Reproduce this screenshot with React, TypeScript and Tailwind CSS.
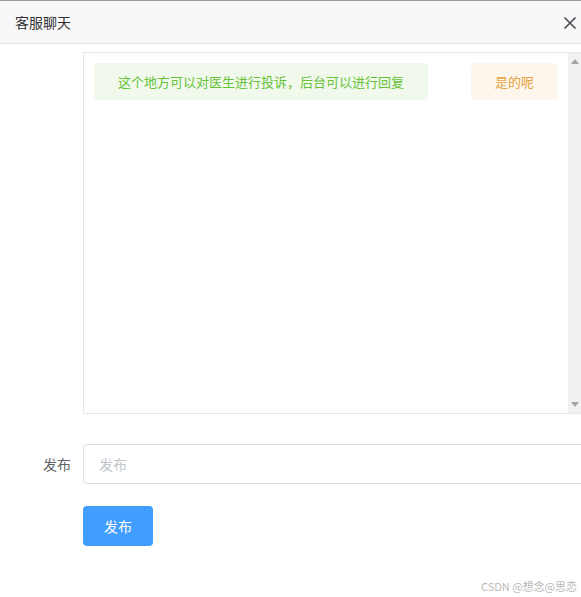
import React from "react";

const font = { fontFamily: '"Noto Sans CJK SC", "Noto Sans", sans-serif' };

export default function App() {
  return (
    <div className="w-[581px] h-[597px] bg-white overflow-hidden relative" style={font}>
      <div className="h-px bg-[#9a9a9a]" />
      <div className="h-[43px] bg-[#f8f8f8] border-b border-[#e6e6e6] flex items-center justify-between pl-[15px] pr-[4px]">
        <span className="text-[14px] text-[#303133] leading-none">客服聊天</span>
        <svg width="14" height="14" viewBox="0 0 14 14" className="mt-[1px]">
          <path d="M1.5 1.5 L12.5 12.5 M12.5 1.5 L1.5 12.5" stroke="#4a4a55" strokeWidth="1.6" fill="none" />
        </svg>
      </div>
      <div className="pl-[83px] pt-[8px]">
        <div className="w-[500px] h-[362px] border border-[#e8e8e8] flex">
          <div className="flex-1 p-[10px] flex items-start justify-between">
            <div className="h-[37px] px-[24px] flex items-center rounded-[4px] bg-[#f0f9eb] text-[#67c23a] text-[13px] leading-none whitespace-nowrap">
              这个地方可以对医生进行投诉，后台可以进行回复
            </div>
            <div className="h-[37px] px-[24px] flex items-center rounded-[4px] bg-[#fdf6ec] text-[#e6a23c] text-[13px] leading-none whitespace-nowrap">
              是的呢
            </div>
          </div>
          <div className="w-[15px] bg-[#f1f1f1] flex flex-col items-center justify-between py-[5px] mr-[-1px]">
            <svg width="8" height="5" viewBox="0 0 8 5" className="ml-[-2px] mt-[1px]">
              <path d="M0 5 L4 0 L8 5 Z" fill="#a3a3a3" />
            </svg>
            <svg width="8" height="5" viewBox="0 0 8 5" className="ml-[-2px] mb-[1px]">
              <path d="M0 0 L8 0 L4 5 Z" fill="#a3a3a3" />
            </svg>
          </div>
        </div>
      </div>
      <div className="flex items-center mt-[30px]">
        <div className="w-[83px] shrink-0 pr-[12px] text-right text-[14px] text-[#606266] leading-none">发布</div>
        <div className="w-[510px] shrink-0 h-[40px] border border-[#dcdfe6] rounded-[4px] flex items-center pl-[15px] text-[14px] text-[#c0c4cc] leading-none">
          发布
        </div>
      </div>
      <div className="pl-[83px] mt-[22px]">
        <div className="w-[70px] h-[40px] rounded-[4px] bg-[#409eff] text-white text-[14px] flex items-center justify-center leading-none">
          发布
        </div>
      </div>
      <div className="absolute right-[4px] bottom-[5px] text-[11px] text-[#b8b8b8] leading-none">
        CSDN @想念@思恋
      </div>
    </div>
  );
}
